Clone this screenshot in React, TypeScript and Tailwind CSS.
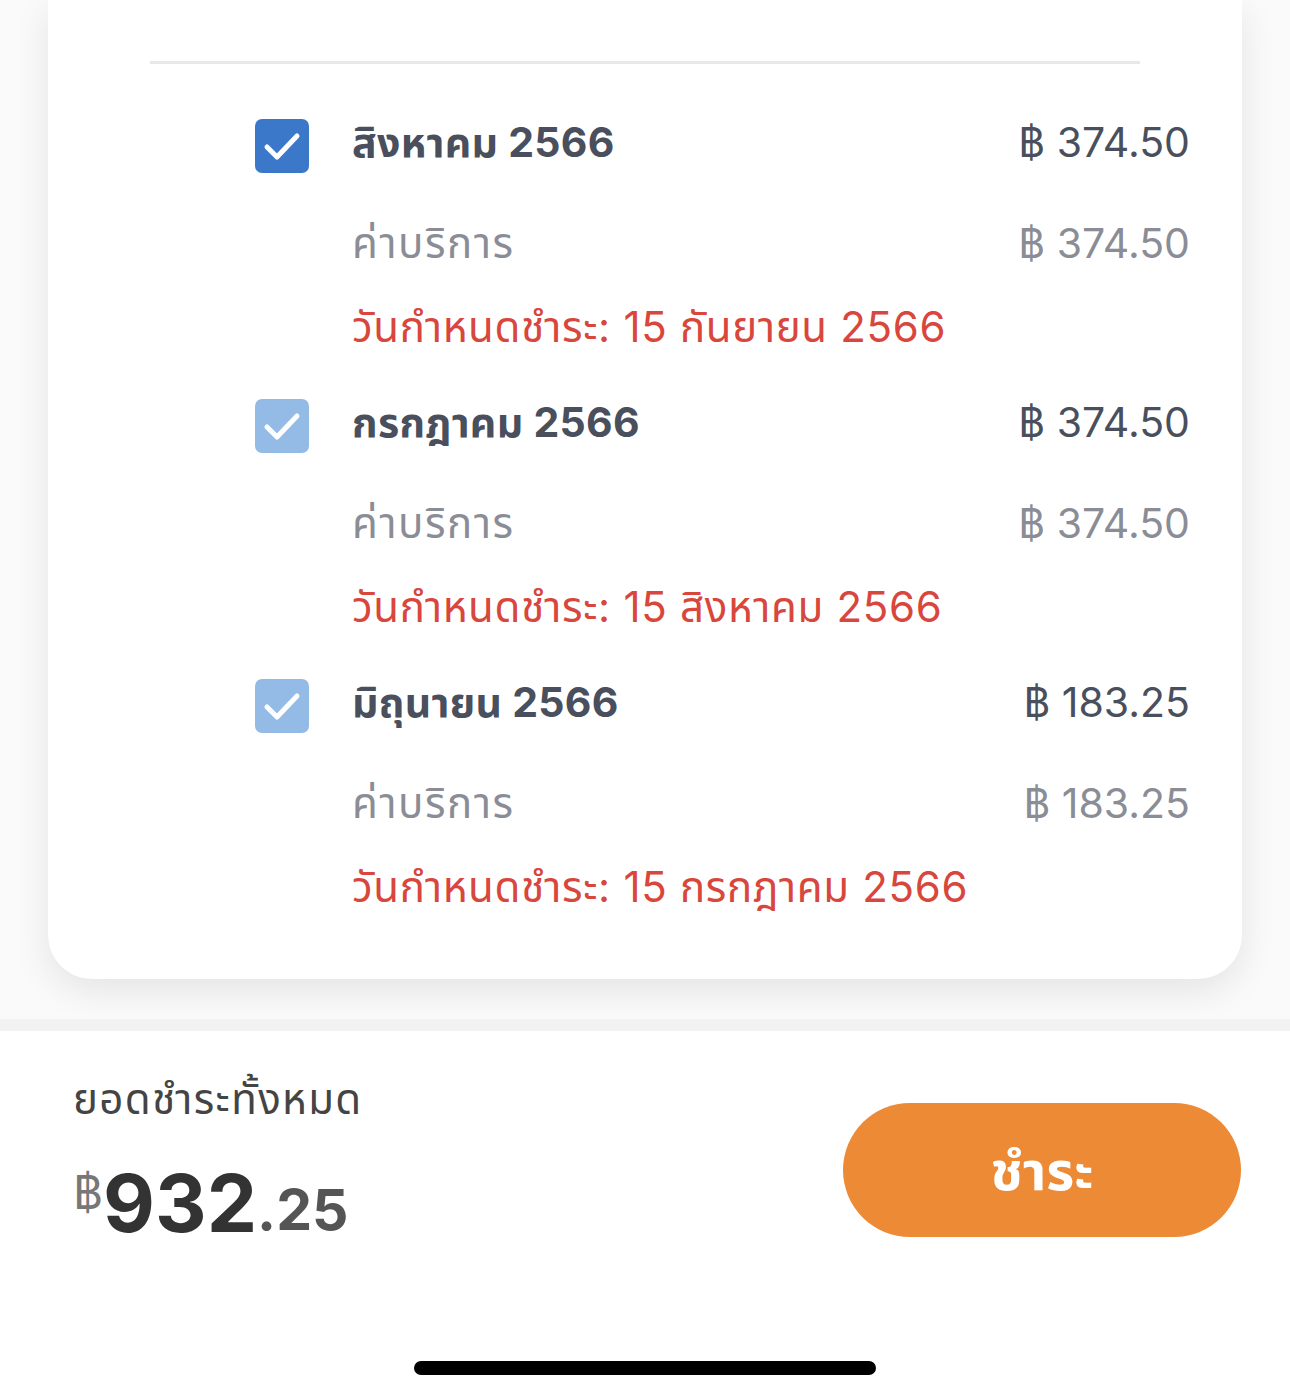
import React from 'react';

type Bill = {
  month: string;
  amount: string;
  due: string;
  active: boolean;
};

const bills: Bill[] = [
  { month: 'สิงหาคม 2566', amount: '374.50', due: '15 กันยายน 2566', active: true },
  { month: 'กรกฎาคม 2566', amount: '374.50', due: '15 สิงหาคม 2566', active: false },
  { month: 'มิถุนายน 2566', amount: '183.25', due: '15 กรกฎาคม 2566', active: false },
];

const font = { fontFamily: 'Inter, "Noto Sans Thai", "Noto Sans", sans-serif' };

const CheckBox: React.FC<{ active: boolean }> = ({ active }) => (
  <div
    className={`mt-[8px] w-[54px] h-[54px] rounded-[7px] flex items-center justify-center ${
      active ? 'bg-[#3b78c9]' : 'bg-[#93bbe6]'
    }`}
  >
    <svg width="54" height="54" viewBox="0 0 54 54" fill="none">
      <path d="M12 28 L22 38 L42 17" stroke="white" strokeWidth="5" strokeLinecap="round" strokeLinejoin="round" />
    </svg>
  </div>
);

const BillGroup: React.FC<{ bill: Bill }> = ({ bill }) => (
  <div className="flex flex-col">
    <div className="h-[56px] flex items-center">
      <CheckBox active={bill.active} />
      <div className="ml-[43px] flex-1 text-[41px] font-bold text-[#494f5c] leading-none tracking-[0.3px]">
        {bill.month}
      </div>
      <div className="text-[41px] text-[#494f5c] leading-none">฿ {bill.amount}</div>
    </div>
    <div className="h-[56px] mt-[45px] flex items-center pl-[97px]">
      <div className="flex-1 text-[42px] text-[#8b8d96] leading-none tracking-[1.6px]">ค่าบริการ</div>
      <div className="text-[41px] text-[#8b8d96] leading-none">฿ {bill.amount}</div>
    </div>
    <div className="h-[56px] mt-[28px] flex items-center pl-[97px]">
      <div className="text-[42px] text-[#d8463c] leading-none tracking-[0.7px]">วันกำหนดชำระ: {bill.due}</div>
    </div>
  </div>
);

const App: React.FC = () => {
  return (
    <div className="w-[1290px] h-[1399px] bg-white overflow-hidden flex flex-col" style={font}>
      <div className="px-[48px] bg-[#fafafa]">
        <div className="bg-white rounded-b-[44px] shadow-[0_12px_36px_rgba(0,0,0,0.09)] pt-[61px] pb-[64px]">
          <div className="mx-[102px] h-[3px] bg-[#e8e8e8]" />
          <div className="mt-[50px] pl-[207px] pr-[52px] flex flex-col gap-[39px]">
            {bills.map((b) => (
              <BillGroup key={b.month} bill={b} />
            ))}
          </div>
        </div>
        <div className="h-[40px]" />
      </div>
      <div className="h-[12px] bg-[#f2f2f2]" />
      <div className="flex-1 flex flex-col">
        <div className="flex justify-between pl-[73px] pr-[49px]">
          <div className="flex flex-col pt-[40px]">
            <div className="text-[42px] text-[#444] leading-[56px] tracking-[1.4px]">ยอดชำระทั้งหมด</div>
            <div className="mt-[36px] flex items-start text-[#333]">
              <span className="text-[46px] text-[#777] leading-none mt-[6px]">฿</span>
              <span className="text-[80px] font-bold leading-none">932</span>
              <span className="text-[57px] font-bold text-[#555] leading-none mt-[18px]">.25</span>
            </div>
          </div>
          <button className="mt-[72px] w-[398px] h-[134px] rounded-full bg-[#ec8a35] text-white text-[54px] font-bold">
            ชำระ
          </button>
        </div>
        <div className="flex-1" />
        <div className="flex justify-center pb-[24px]">
          <div className="w-[462px] h-[14px] rounded-full bg-black" />
        </div>
      </div>
    </div>
  );
};

export default App;
